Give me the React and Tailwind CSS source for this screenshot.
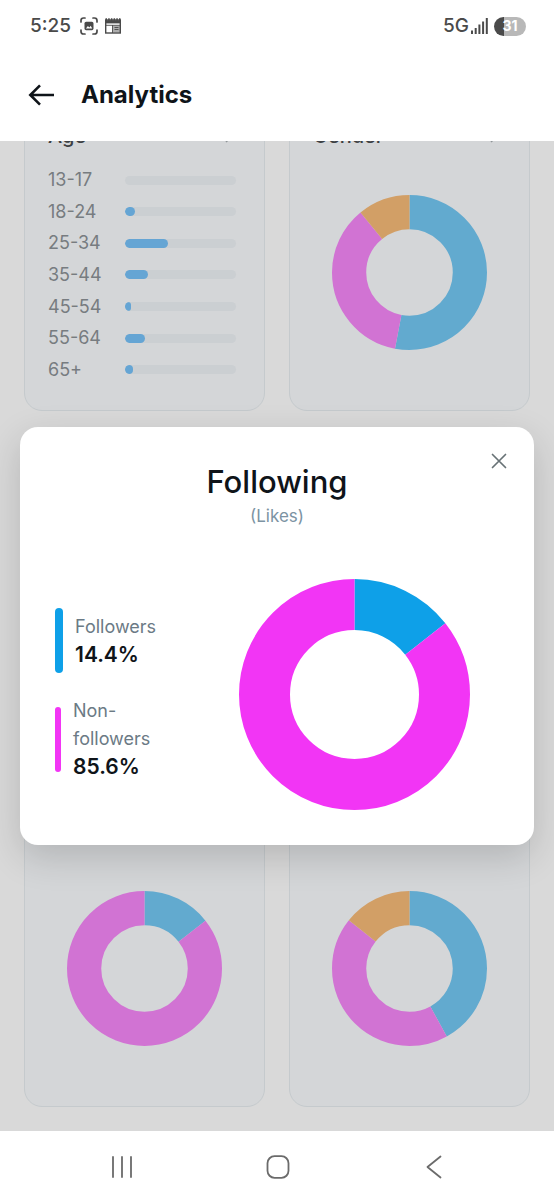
import React from "react";

const AGES = [
  { label: "13-17", value: 0 },
  { label: "18-24", value: 9 },
  { label: "25-34", value: 39 },
  { label: "35-44", value: 21 },
  { label: "45-54", value: 5 },
  { label: "55-64", value: 18 },
  { label: "65+", value: 7 },
];

const MUTED = { blue: "#62aacf", pink: "#d173d3", orange: "#d29f66" };

function Donut({ slices, label, className }) {
  let start = 0;
  return (
    <svg viewBox="0 0 154 154" role="img" aria-label={label} className={className}>
      <g transform="rotate(-90 77 77)" fill="none" strokeWidth="34">
        {slices.map((s, i) => {
          const offset = -start;
          start += s.value;
          return (
            <circle
              key={i}
              cx="77"
              cy="77"
              r="60"
              pathLength="100"
              stroke={s.color}
              strokeDasharray={`${s.value} ${100 - s.value}`}
              strokeDashoffset={offset}
            />
          );
        })}
      </g>
    </svg>
  );
}

function StatusBar() {
  return (
    <div className="flex h-13 items-center justify-between pr-7 pl-[30px] text-[#4a4a4a]">
      <div className="flex items-center">
        <span className="text-[19px] font-medium">5:25</span>
        <svg className="ml-[9px] h-[18px] w-[18px]" viewBox="0 0 18 18" fill="none" stroke="currentColor" strokeWidth="1.7" strokeLinecap="round">
          <path d="M1 5V3.500Q1 1 3.500 1H5M13 1h1.500Q17 1 17 3.500V5M17 13v1.500Q17 17 14.500 17H13M5 17H3.500Q1 17 1 14.500V13" />
          <rect x="4.500" y="4.800" width="9" height="8.400" rx="1.600" fill="currentColor" stroke="none" />
          <path d="M5.900 11.400l2-2.300 1.500 1.400 1.300-1.800 1.500 2.700z" fill="#fff" stroke="none" />
        </svg>
        <svg className="ml-[6px] h-[18px] w-[18px]" viewBox="0 0 18 18" fill="none" stroke="currentColor">
          <rect x="1.700" y="3" width="14.600" height="13" strokeWidth="1.400" />
          <path d="M1 4.800h16" strokeWidth="3.200" />
          <path d="M1.500 2.500h15" strokeWidth="2.400" strokeDasharray="1.500 1.200" />
          <rect x="8.500" y="8.500" width="7.500" height="7" fill="currentColor" fillOpacity=".45" stroke="none" />
          <path d="M2 8.300h14M8.500 8v8M10.500 10.500h4M10.500 12.500h4" strokeWidth=".9" />
        </svg>
      </div>
      <div className="flex items-center">
        <span className="text-[19px] font-medium">5G</span>
        <svg className="ml-[2px] h-[18px] w-[17px]" viewBox="0 0 17 18" stroke="currentColor" strokeWidth="2">
          <path d="M1 13.500V17M4.700 11v6M8.400 7.500V17M12.100 4.500V17M15.800 1v16" />
        </svg>
        <div className="ml-[6px] flex h-[19px] w-8 items-center justify-center rounded-full bg-linear-to-r from-[#4a4a4a] from-30% to-[#b8b8b8] to-30% text-sm font-bold text-white">
          31
        </div>
      </div>
    </div>
  );
}

function Card({ title, tall, children }) {
  return (
    <section
      className={
        "flex flex-col rounded-[18px] border border-[#c5cacd] bg-[#d4d6d8] pt-5 pr-[28px] pb-[30px] pl-[23px] " +
        (tall ? "h-[672px] justify-end" : "h-[324px]")
      }
    >
      {title && (
        <div className="flex h-14 shrink-0 items-center justify-between">
          <h2 className="text-xl font-medium text-[#3d4043]">{title}</h2>
          <svg className="h-4 w-4" viewBox="0 0 16 16" fill="none" stroke="#8f9598" strokeWidth="1.500">
            <path d="M6 2l6 6-6 6" />
          </svg>
        </div>
      )}
      {children}
    </section>
  );
}

function DonutCard({ title, tall, label, slices }) {
  return (
    <Card title={title} tall={tall}>
      <div className="flex h-[216px] items-center justify-center pl-[5px]">
        <Donut className="w-[155px] shrink-0" label={label} slices={slices} />
      </div>
    </Card>
  );
}

function AgeCard() {
  return (
    <Card title="Age">
      <ul className="flex h-[216px] flex-col justify-between pt-[6px] text-lg text-[#777c80]">
        {AGES.map((a) => (
          <li key={a.label} className="flex h-5 items-center">
            <span className="w-[77px] shrink-0">{a.label}</span>
            <div className="h-[9px] flex-1 overflow-hidden rounded-full bg-[#cbcfd2]">
              <div className="h-full rounded-full bg-[#65a5d4]" style={{ width: `${a.value}%` }} />
            </div>
          </li>
        ))}
      </ul>
    </Card>
  );
}

function FollowingDialog() {
  return (
    <div
      role="dialog"
      aria-labelledby="dialog-title"
      className="relative w-full rounded-[18px] bg-white pt-[35px] pb-[35px] shadow-[0_12px_36px_rgba(0,0,0,0.16)]"
    >
      <button aria-label="Close" className="absolute top-[22px] right-[23px] p-1">
        <svg className="h-4 w-4" viewBox="0 0 16 16" fill="none" stroke="#687276" strokeWidth="1.700" strokeLinecap="round">
          <path d="M1.500 1.500l13 13M14.500 1.500l-13 13" />
        </svg>
      </button>
      <h2 id="dialog-title" className="text-center text-[31px] leading-10 font-medium text-[#0f1419]">
        Following
      </h2>
      <p className="text-center text-[17px] leading-7 text-[#7c93a3]">(Likes)</p>
      <div className="mt-[49px] flex items-center justify-between pr-16 pl-[35px]">
        <dl className="flex w-32 flex-col gap-6 text-lg leading-7">
          <div className="flex items-center gap-3">
            <span className="h-[65px] w-2 shrink-0 rounded-full bg-[#0ea0e8]" />
            <div>
              <dt className="text-[#6b7a85]">Followers</dt>
              <dd className="text-[21px] font-semibold text-[#0f1419]">14.4%</dd>
            </div>
          </div>
          <div className="flex items-center gap-3">
            <span className="h-[65px] w-[6px] shrink-0 rounded-full bg-[#f235f5]" />
            <div>
              <dt className="w-24 text-[#6b7a85]">Non-followers</dt>
              <dd className="text-[21px] font-semibold text-[#0f1419]">85.6%</dd>
            </div>
          </div>
        </dl>
        <Donut
          className="w-[231px] shrink-0"
          label="Followers 14.4%, non-followers 85.6%"
          slices={[
            { value: 14.4, color: "#0ea0e8" },
            { value: 85.6, color: "#f235f5" },
          ]}
        />
      </div>
    </div>
  );
}

function NavBar() {
  return (
    <nav className="grid h-[69px] shrink-0 grid-cols-3 items-center bg-white pr-[42px] pb-[2px] pt-1 pl-11 text-[#6b6b6b]">
      <button aria-label="Recent apps" className="flex justify-center">
        <svg className="h-6 w-6" viewBox="0 0 24 24" fill="none" stroke="currentColor" strokeWidth="1.800" strokeLinecap="round">
          <path d="M3 2v20M12 2v20M21 2v20" />
        </svg>
      </button>
      <button aria-label="Home" className="flex justify-center">
        <svg className="h-6 w-6" viewBox="0 0 24 24" fill="none" stroke="currentColor" strokeWidth="1.800">
          <rect x="1.500" y="1.200" width="21" height="21.600" rx="7" />
        </svg>
      </button>
      <button aria-label="Back" className="flex justify-center">
        <svg className="h-6 w-6" viewBox="0 0 24 24" fill="none" stroke="currentColor" strokeWidth="1.800" strokeLinecap="round" strokeLinejoin="round">
          <path d="M18.500 1.500L5.500 12l13 10.500" />
        </svg>
      </button>
    </nav>
  );
}

export default function App() {
  return (
    <div className="flex h-screen flex-col overflow-hidden bg-white font-['Inter','Liberation_Sans',sans-serif]">
      <header className="shrink-0 bg-white pb-[3px]">
        <StatusBar />
        <div className="flex h-[86px] items-center gap-[26px] pl-7">
          <button aria-label="Back">
            <svg className="h-[22px] w-[27px]" viewBox="0 0 27 22" fill="none" stroke="#0f1419" strokeWidth="2.600">
              <path d="M26 11H2.500M12 1.300L2.300 11l9.700 9.700" />
            </svg>
          </button>
          <h1 className="text-2xl font-bold text-[#0f1419]">Analytics</h1>
        </div>
      </header>
      <main className="relative flex min-h-0 flex-1 flex-col justify-end overflow-hidden bg-[#d9d9d9]">
        <div className="grid shrink-0 grid-cols-2 gap-6 px-6 pb-6">
          <AgeCard />
          <DonutCard
            title="Gender"
            label="Gender"
            slices={[
              { value: 53, color: MUTED.blue },
              { value: 36.1, color: MUTED.pink },
              { value: 10.9, color: MUTED.orange },
            ]}
          />
          <DonutCard
            tall
            label="Following"
            slices={[
              { value: 14.4, color: MUTED.blue },
              { value: 85.6, color: MUTED.pink },
            ]}
          />
          <DonutCard
            tall
            label="Breakdown"
            slices={[
              { value: 42, color: MUTED.blue },
              { value: 43.700, color: MUTED.pink },
              { value: 14.300, color: MUTED.orange },
            ]}
          />
        </div>
        <div className="absolute inset-0 flex items-center px-5">
          <FollowingDialog />
        </div>
      </main>
      <NavBar />
    </div>
  );
}
